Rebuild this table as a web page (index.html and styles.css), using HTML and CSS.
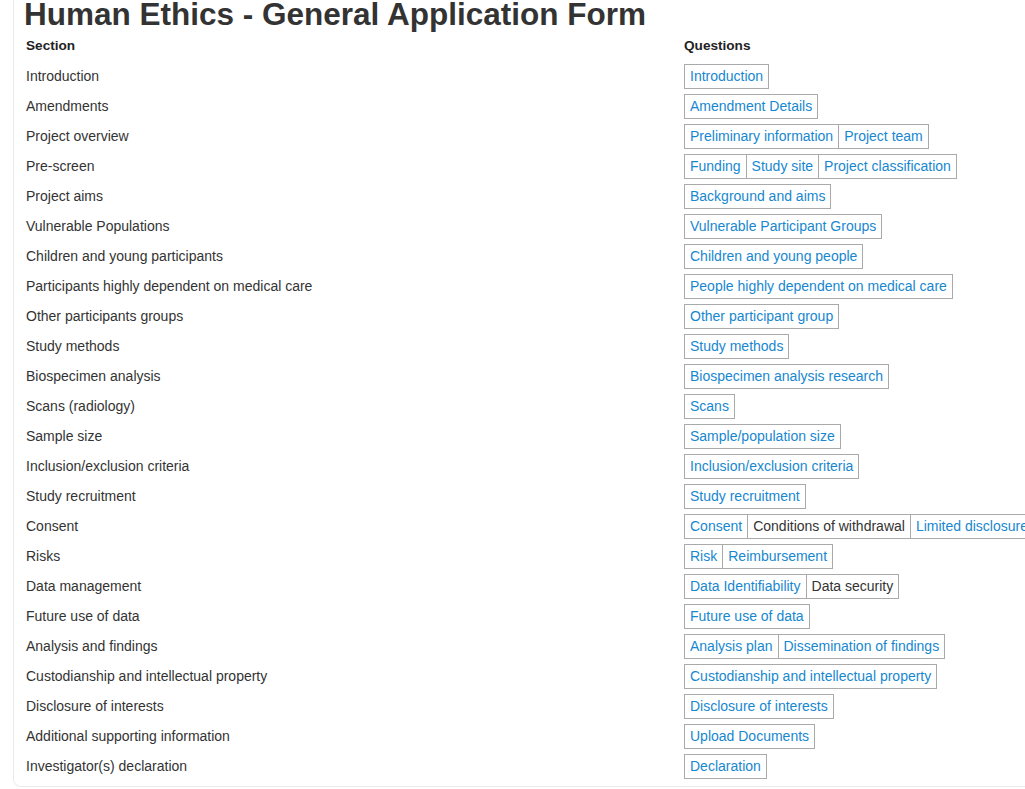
FILE: index.html
```html
<!DOCTYPE html>
<html lang="en">
<head>
<meta charset="utf-8">
<title>Human Ethics - General Application Form</title>
<link rel="stylesheet" href="styles.css">
</head>
<body>
<div class="card">
  <h1 class="title">Human Ethics - General Application Form</h1>
  <div class="grid">
    <div class="head head-section">Section</div>
    <div class="head">Questions</div>

    <div class="label">Introduction</div>
    <div class="tags"><span class="tag">Introduction</span></div>

    <div class="label">Amendments</div>
    <div class="tags"><span class="tag">Amendment Details</span></div>

    <div class="label">Project overview</div>
    <div class="tags"><span class="tag">Preliminary information</span><span class="tag">Project team</span></div>

    <div class="label">Pre-screen</div>
    <div class="tags"><span class="tag">Funding</span><span class="tag">Study site</span><span class="tag">Project classification</span></div>

    <div class="label">Project aims</div>
    <div class="tags"><span class="tag">Background and aims</span></div>

    <div class="label">Vulnerable Populations</div>
    <div class="tags"><span class="tag">Vulnerable Participant Groups</span></div>

    <div class="label">Children and young participants</div>
    <div class="tags"><span class="tag">Children and young people</span></div>

    <div class="label">Participants highly dependent on medical care</div>
    <div class="tags"><span class="tag">People highly dependent on medical care</span></div>

    <div class="label">Other participants groups</div>
    <div class="tags"><span class="tag">Other participant group</span></div>

    <div class="label">Study methods</div>
    <div class="tags"><span class="tag">Study methods</span></div>

    <div class="label">Biospecimen analysis</div>
    <div class="tags"><span class="tag">Biospecimen analysis research</span></div>

    <div class="label">Scans (radiology)</div>
    <div class="tags"><span class="tag">Scans</span></div>

    <div class="label">Sample size</div>
    <div class="tags"><span class="tag">Sample/population size</span></div>

    <div class="label">Inclusion/exclusion criteria</div>
    <div class="tags"><span class="tag">Inclusion/exclusion criteria</span></div>

    <div class="label">Study recruitment</div>
    <div class="tags"><span class="tag">Study recruitment</span></div>

    <div class="label">Consent</div>
    <div class="tags"><span class="tag">Consent</span><span class="tag tag-plain">Conditions of withdrawal</span><span class="tag">Limited disclosure</span></div>

    <div class="label">Risks</div>
    <div class="tags"><span class="tag">Risk</span><span class="tag">Reimbursement</span></div>

    <div class="label">Data management</div>
    <div class="tags"><span class="tag">Data Identifiability</span><span class="tag tag-plain">Data security</span></div>

    <div class="label">Future use of data</div>
    <div class="tags"><span class="tag">Future use of data</span></div>

    <div class="label">Analysis and findings</div>
    <div class="tags"><span class="tag">Analysis plan</span><span class="tag">Dissemination of findings</span></div>

    <div class="label">Custodianship and intellectual property</div>
    <div class="tags"><span class="tag">Custodianship and intellectual property</span></div>

    <div class="label">Disclosure of interests</div>
    <div class="tags"><span class="tag">Disclosure of interests</span></div>

    <div class="label">Additional supporting information</div>
    <div class="tags"><span class="tag">Upload Documents</span></div>

    <div class="label">Investigator(s) declaration</div>
    <div class="tags"><span class="tag">Declaration</span></div>
  </div>
</div>
</body>
</html>
```
FILE: styles.css
```css
html {
  overflow: hidden;
  background: #ffffff;
}

body {
  margin: 0;
  font-family: "Liberation Sans", Arial, sans-serif;
  font-size: 14px;
  color: #333333;
}

.card {
  margin-left: 13px;
  width: 1100px;
  padding: 0 0 5px 10px;
  border: 1px solid #ebebeb;
  border-top: 0;
  border-radius: 0 0 8px 8px;
  box-sizing: border-box;
}

.title {
  margin: 0;
  font-size: 31.5px;
  line-height: 28px;
  font-weight: bold;
  color: #333333;
}

.grid {
  display: grid;
  grid-template-columns: 660px auto;
  grid-template-rows: 33px;
  grid-auto-rows: 30px;
  align-items: center;
}

.head {
  font-weight: bold;
  font-size: 13.6px;
  color: #222222;
  padding-top: 1px;
}

.head-section {
  padding-left: 2px;
}

.label {
  padding-left: 2px;
  white-space: nowrap;
}

.tags {
  display: flex;
  white-space: nowrap;
}

.tag {
  display: block;
  border: 1px solid #aaaaaa;
  padding: 0 5px;
  line-height: 23px;
  color: #1787cf;
}

.tag + .tag {
  margin-left: -1px;
}

.tag-plain {
  color: #333333;
}
```
